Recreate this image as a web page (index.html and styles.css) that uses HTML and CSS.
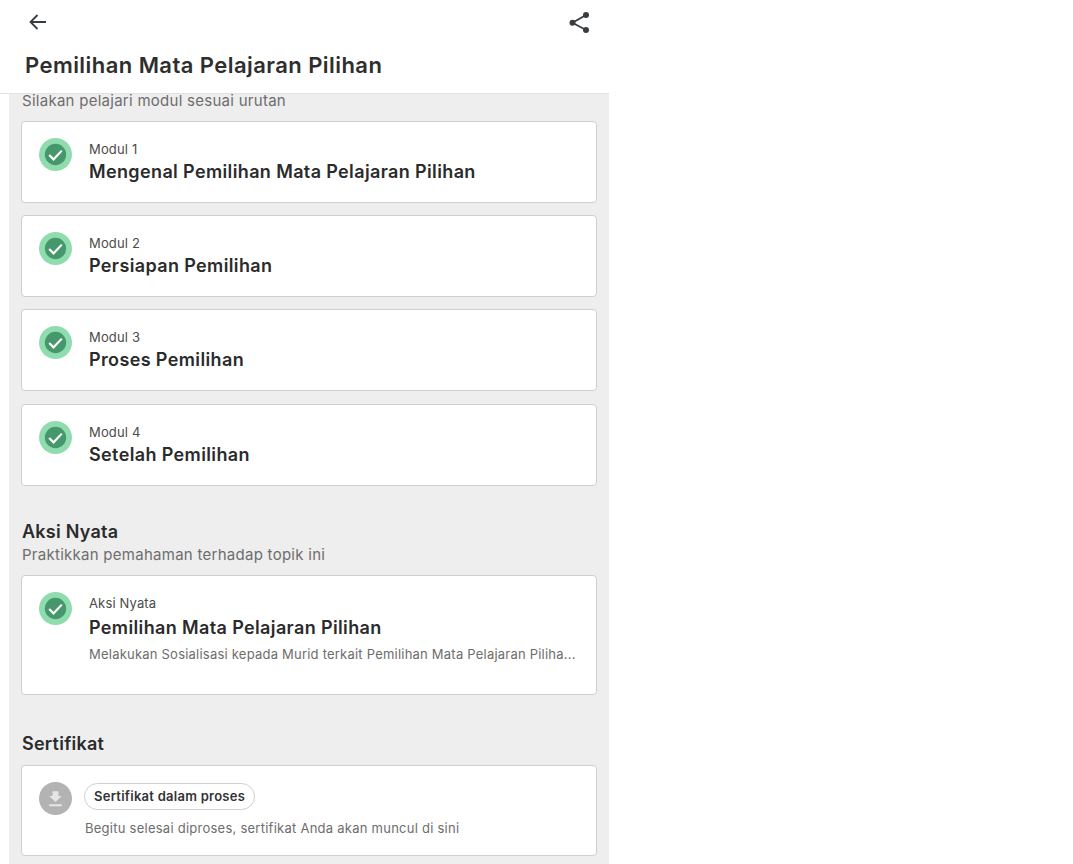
FILE: index.html
```html
<!DOCTYPE html>
<html>
<head>
  <meta charset="UTF-8" />
  <title>Pemilihan Mata Pelajaran Pilihan</title>
  <link rel="stylesheet" href="styles.css">
</head>
<body>
  <div class="page">
    <header class="top-bar">
      <div class="top-icons">
        <svg viewBox="0 0 24 24" width="24" height="24"><path d="M20 12H4.500M11.500 5l-7 7 7 7" fill="none" stroke="#3a3d40" stroke-width="1.800"/></svg>
        <svg viewBox="0 0 24 24" width="24" height="24"><path d="M18 5L4.500 12.700L18 20" fill="none" stroke="#3a3d40" stroke-width="1.800"/><circle cx="18" cy="5" r="3" fill="#3a3d40"/><circle cx="4.500" cy="12.700" r="3" fill="#3a3d40"/><circle cx="18" cy="20" r="3" fill="#3a3d40"/></svg>
      </div>
      <h1>Pemilihan Mata Pelajaran Pilihan</h1>
    </header>

    <main class="content">
      <p class="section-sub first">Silakan pelajari modul sesuai urutan</p>

      <div class="card-list">
        <div class="card module">
          <svg class="status" viewBox="0 0 34 34" width="33" height="33"><circle cx="17" cy="17" r="17" fill="#8fdcaf"/><circle cx="17" cy="17" r="11" fill="#47976c"/><path d="M10.500 17.500l4.500 4.500 8.500-9" fill="none" stroke="#fff" stroke-width="2.200"/></svg>
          <div class="card-text">
            <div class="eyebrow">Modul 1</div>
            <div class="card-title">Mengenal Pemilihan Mata Pelajaran Pilihan</div>
          </div>
        </div>
        <div class="card module">
          <svg class="status" viewBox="0 0 34 34" width="33" height="33"><circle cx="17" cy="17" r="17" fill="#8fdcaf"/><circle cx="17" cy="17" r="11" fill="#47976c"/><path d="M10.500 17.500l4.500 4.500 8.500-9" fill="none" stroke="#fff" stroke-width="2.200"/></svg>
          <div class="card-text">
            <div class="eyebrow">Modul 2</div>
            <div class="card-title">Persiapan Pemilihan</div>
          </div>
        </div>
        <div class="card module">
          <svg class="status" viewBox="0 0 34 34" width="33" height="33"><circle cx="17" cy="17" r="17" fill="#8fdcaf"/><circle cx="17" cy="17" r="11" fill="#47976c"/><path d="M10.500 17.500l4.500 4.500 8.500-9" fill="none" stroke="#fff" stroke-width="2.200"/></svg>
          <div class="card-text">
            <div class="eyebrow">Modul 3</div>
            <div class="card-title">Proses Pemilihan</div>
          </div>
        </div>
        <div class="card module">
          <svg class="status" viewBox="0 0 34 34" width="33" height="33"><circle cx="17" cy="17" r="17" fill="#8fdcaf"/><circle cx="17" cy="17" r="11" fill="#47976c"/><path d="M10.500 17.500l4.500 4.500 8.500-9" fill="none" stroke="#fff" stroke-width="2.200"/></svg>
          <div class="card-text">
            <div class="eyebrow">Modul 4</div>
            <div class="card-title">Setelah Pemilihan</div>
          </div>
        </div>
      </div>

      <h2 class="section-title aksi">Aksi Nyata</h2>
      <p class="section-sub">Praktikkan pemahaman terhadap topik ini</p>

      <div class="card action">
        <svg class="status" viewBox="0 0 34 34" width="33" height="33"><circle cx="17" cy="17" r="17" fill="#8fdcaf"/><circle cx="17" cy="17" r="11" fill="#47976c"/><path d="M10.500 17.500l4.500 4.500 8.500-9" fill="none" stroke="#fff" stroke-width="2.200"/></svg>
        <div class="card-text">
          <div class="eyebrow">Aksi Nyata</div>
          <div class="card-title">Pemilihan Mata Pelajaran Pilihan</div>
          <div class="card-desc">Melakukan Sosialisasi kepada Murid terkait Pemilihan Mata Pelajaran Piliha...</div>
        </div>
      </div>

      <h2 class="section-title sertifikat">Sertifikat</h2>

      <div class="card cert">
        <svg class="status" viewBox="0 0 34 34" width="33" height="33"><circle cx="17" cy="17" r="17" fill="#b3b3b3"/><path d="M14 9.500h6v5h3.500L17 20.500l-6.500-6H14zM10.500 23h13v2h-13z" fill="#e6e6e6"/></svg>
        <div class="cert-text">
          <div class="pill">Sertifikat dalam proses</div>
          <div class="cert-note">Begitu selesai diproses, sertifikat Anda akan muncul di sini</div>
        </div>
      </div>
    </main>
  </div>
</body>
</html>
```

FILE: styles.css
```css
body {
  margin: 0;
  height: 864px;
  overflow: hidden;
  background: #fff;
  font-family: Inter, 'Noto Sans', sans-serif;
  color: #2b2b2b;
}
.page {
  width: 609px;
}
.top-bar {
  height: 93px;
  border-bottom: 1px solid #e2e2e2;
  background: #fff;
}
.top-icons {
  display: flex;
  justify-content: space-between;
  padding: 10px 17px 0 26px;
}
.top-bar h1 {
  margin: 14px 0 0 25px;
  font-size: 22px;
  line-height: 34px;
  font-weight: 600;
  letter-spacing: 0.44px;
  color: #2e2e2e;
}
.content {
  margin-left: 9px;
  padding: 0 12px;
  height: 770px;
  background: #eee;
}
.section-sub {
  margin: 1px 0 0 1px;
  font-size: 15px;
  line-height: 20px;
  letter-spacing: 0.27px;
  color: #6d6d6d;
}
.section-sub.first {
  margin: 0 0 13px 1px;
  line-height: 14px;
}
.section-title {
  margin: 0 0 0 1px;
  font-size: 18px;
  line-height: 24px;
  font-weight: 600;
  letter-spacing: 0.25px;
  color: #2b2b2b;
}
.section-title.aksi {
  margin-top: 34px;
}
.section-title.sertifikat {
  margin-top: 37px;
  margin-bottom: 9px;
}
.card-list {
  display: flex;
  flex-direction: column;
  gap: 12.2px;
}
.card {
  display: flex;
  gap: 17px;
  box-sizing: border-box;
  padding: 16px 17px;
  background: #fff;
  border: 1px solid #cfcfcf;
  border-radius: 4px;
}
.module {
  height: 82px;
}
.action {
  height: 120px;
  margin-top: 10px;
}
.cert {
  height: 91px;
  gap: 12px;
}
.status {
  flex: none;
}
.card-text {
  min-width: 0;
  flex: 1;
  margin-top: 1px;
}
.eyebrow {
  font-size: 13px;
  line-height: 20px;
  letter-spacing: 0.15px;
  color: #4b4b4b;
}
.card-title {
  font-size: 18px;
  line-height: 26px;
  font-weight: 600;
  letter-spacing: 0.37px;
  color: #2b2b2b;
}
.action .card-title {
  line-height: 28px;
  margin-top: 1px;
}
.card-desc {
  margin-top: 2px;
  font-size: 13px;
  line-height: 20px;
  letter-spacing: 0.22px;
  color: #6d6d6d;
  white-space: nowrap;
}
.cert-text {
  min-width: 0;
  margin-top: 1px;
}
.pill {
  box-sizing: border-box;
  width: fit-content;
  height: 27px;
  padding: 0 9px;
  border: 1px solid #cfcfcf;
  border-radius: 14px;
  font-size: 13px;
  line-height: 25px;
  font-weight: 600;
  letter-spacing: 0.26px;
  color: #333;
}
.cert-note {
  margin: 8px 0 0 1px;
  font-size: 13px;
  line-height: 20px;
  letter-spacing: 0.25px;
  color: #6d6d6d;
}
```
